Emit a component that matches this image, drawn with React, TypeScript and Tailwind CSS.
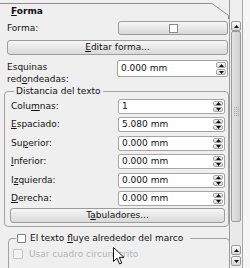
import React from "react";

const Tri = ({ down }: { down?: boolean }) => (
  <svg width="5" height="3" viewBox="0 0 5 3">
    <path d={down ? "M0 0H5L2.5 3Z" : "M0 3H5L2.5 0Z"} fill="#111" />
  </svg>
);

const Spin = ({ value, w = "w-[107px]", h = "h-[15px]" }: { value: string; w?: string; h?: string }) => (
  <div className={`${w} ${h} bg-white border border-[#a5a5a5] rounded-[2px] flex items-center shrink-0`}>
    <span className="flex-1 pl-[3px] text-[#111]">{value}</span>
    <div className="w-[12px] h-full flex flex-col gap-[1px] p-[1px]">
      <div className="flex-1 rounded-[2px] border border-[#a8a8a8] bg-linear-to-b from-[#fafafa] to-[#d4d4d4] flex items-center justify-center">
        <Tri />
      </div>
      <div className="flex-1 rounded-[2px] border border-[#a8a8a8] bg-linear-to-b from-[#fafafa] to-[#d4d4d4] flex items-center justify-center">
        <Tri down />
      </div>
    </div>
  </div>
);

const Btn = ({ children, cls }: { children: React.ReactNode; cls: string }) => (
  <div
    className={`${cls} border border-[#9c9c9c] rounded-[3px] bg-linear-to-b from-[#f7f7f7] to-[#d9d9d9] flex items-center justify-center text-[#111]`}
  >
    {children}
  </div>
);

const U = ({ c }: { c: string }) => <span className="underline underline-offset-[1px]">{c}</span>;

const rows: [React.ReactNode, string][] = [
  [<>Colu<U c="m" />nas:</>, "1"],
  [<><U c="E" />spaciado:</>, "5.080 mm"],
  [<>Su<U c="p" />erior:</>, "0.000 mm"],
  [<><U c="I" />nferior:</>, "0.000 mm"],
  [<>I<U c="z" />quierda:</>, "0.000 mm"],
  [<><U c="D" />erecha:</>, "0.000 mm"],
];

export default function App() {
  return (
    <div className="w-[250px] h-[268px] bg-[#efefef] relative overflow-hidden flex font-['DejaVu_Sans',sans-serif] text-[9px] leading-[11px] text-[#111]">
      {/* panel */}
      <div className="w-[229px] flex flex-col">
        {/* toolbox tab header */}
        <div className="relative h-[19px] shrink-0">
          <svg className="absolute inset-0" width="229" height="19">
            <polyline points="0,3.5 212,3.5 228.5,15.5 228.5,19" fill="none" stroke="#8e8e8e" strokeWidth="1" />
          </svg>
          <div className="pl-[11px] pt-[6px] font-bold">
            <U c="F" />orma
          </div>
        </div>

        <div className="pl-[7px] pr-[1px] flex flex-col">
          <div className="mt-[2px] h-[14px] flex items-center justify-between">
            <span>Forma:</span>
            <Btn cls="w-[110px] h-[14px]">
              <div className="w-[9px] h-[9px] bg-white border border-[#8a8a8a]" />
            </Btn>
          </div>

          <Btn cls="mt-[5px] h-[15px]">
            <span>
              <U c="E" />ditar forma...
            </span>
          </Btn>

          <div className="mt-[5px] flex justify-between">
            <div className="pt-[1px] leading-[12px]">
              Esquinas
              <br />
              red<U c="o" />ndeadas:
            </div>
            <Spin value="0.000 mm" w="w-[111px]" h="h-[17px]" />
          </div>

          <fieldset className="mt-[1px] -ml-[3px] w-[225px] border border-[#a2a2a2] rounded-[4px] pl-[6px] pr-[3px] pb-[3px]">
            <legend className="ml-[3px] px-[2px]">Distancia del texto</legend>
            <div className="flex flex-col gap-[3.4px] pt-[2px]">
              {rows.map(([l, v], i) => (
                <div key={i} className="flex items-center justify-between">
                  <span>{l}</span>
                  <Spin value={v} />
                </div>
              ))}
            </div>
            <Btn cls="mt-[2px] -ml-[1px] h-[15px]">
              <span>
                T<U c="a" />buladores...
              </span>
            </Btn>
          </fieldset>

          <fieldset className="mt-[6px] ml-[1px] w-[222px] h-[40px] border border-[#a2a2a2] rounded-[4px] pl-[4px]">
            <legend className="ml-[3px] pl-[1px] pr-[7px] flex items-center gap-[4px]">
              <span className="w-[9px] h-[9px] bg-white border border-[#7d7d7d] rounded-[1px]" />
              <span>
                El texto <U c="f" />luye alrededor del marco
              </span>
            </legend>
            <div className="mt-[5px] flex items-center gap-[6px] text-[#b4b4b4]">
              <span className="w-[10px] h-[10px] bg-[#f2f2f2] border border-[#c6c6c6] rounded-[1px]" />
              <span>Usar cuadro circunscrito</span>
            </div>
          </fieldset>
        </div>
      </div>

      {/* scrollbar */}
      <div className="w-[13px] flex flex-col border-l border-[#9a9a9a] pt-[21px] pr-[1px] pl-[1px]">
        <div className="h-[10px] rounded-[2px] border border-[#9a9a9a] bg-linear-to-b from-[#fafafa] to-[#d6d6d6] flex items-center justify-center">
          <Tri />
        </div>
        <div className="h-[191px] rounded-[2px] border border-[#9a9a9a] bg-linear-to-r from-[#e4e4e4] to-[#cfcfcf] flex items-center justify-center">
          <div className="grid grid-cols-3 gap-[1px] mt-[-30px]">
            {Array.from({ length: 15 }).map((_, i) => (
              <span key={i} className="w-[1px] h-[1px] bg-[#a6a6a6]" />
            ))}
          </div>
        </div>
        <div className="h-[23px] bg-[#e9e9e9]" />
        <div className="h-[10px] rounded-[2px] border border-[#9a9a9a] bg-linear-to-b from-[#fafafa] to-[#d6d6d6] flex items-center justify-center">
          <Tri />
        </div>
        <div className="mt-[1px] h-[10px] rounded-[2px] border border-[#9a9a9a] bg-linear-to-b from-[#fafafa] to-[#d6d6d6] flex items-center justify-center">
          <Tri down />
        </div>
      </div>

      {/* outer strip */}
      <div className="flex-1 border-l border-[#a8a8a8] bg-[#f6f6f6]" />

      {/* mouse pointer */}
      <svg className="absolute left-[113px] top-[247px]" width="12" height="18" viewBox="0 0 12 18">
        <path d="M0.5 0.5V14.5L4 11.2L6.6 17L8.8 16L6.3 10.4H11Z" fill="#fff" stroke="#111" strokeWidth="1" strokeLinejoin="round" />
      </svg>
    </div>
  );
}
